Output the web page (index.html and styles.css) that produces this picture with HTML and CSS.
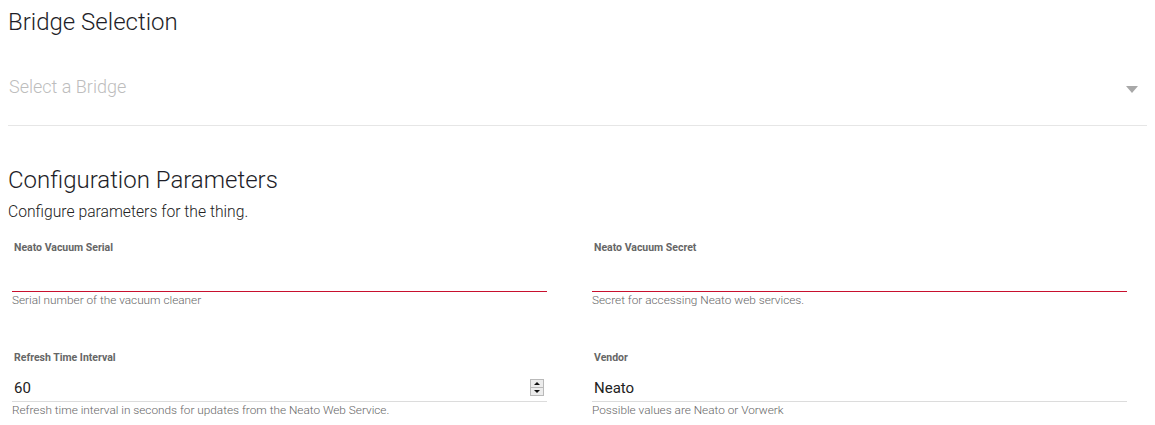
FILE: index.html
```html
<!DOCTYPE html>
<html lang="en">
<head>
<meta charset="utf-8">
<title>Thing configuration</title>
<link rel="stylesheet" href="styles.css">
</head>
<body>
  <h2 class="section-title">Bridge Selection</h2>
  <div class="bridge-select">
    <span class="placeholder">Select a Bridge</span>
    <span class="caret"></span>
  </div>

  <h2 class="section-title config-title">Configuration Parameters</h2>
  <p class="section-desc">Configure parameters for the thing.</p>

  <div class="fields">
    <div class="field">
      <label class="field-label">Neato Vacuum Serial</label>
      <div class="field-input invalid"><input type="text" value=""></div>
      <div class="field-help">Serial number of the vacuum cleaner</div>
    </div>
    <div class="field">
      <label class="field-label">Neato Vacuum Secret</label>
      <div class="field-input invalid"><input type="text" value=""></div>
      <div class="field-help">Secret for accessing Neato web services.</div>
    </div>
    <div class="field">
      <label class="field-label">Refresh Time Interval</label>
      <div class="field-input">
        <input type="text" value="60">
        <span class="spinner"><span class="spin-up"></span><span class="spin-down"></span></span>
      </div>
      <div class="field-help">Refresh time interval in seconds for updates from the Neato Web Service.</div>
    </div>
    <div class="field">
      <label class="field-label">Vendor</label>
      <div class="field-input"><input type="text" value="Neato"></div>
      <div class="field-help">Possible values are Neato or Vorwerk</div>
    </div>
  </div>
</body>
</html>
```
FILE: styles.css
```css
html, body {
  margin: 0;
  padding: 0;
  background: #ffffff;
}
body {
  margin: 8px;
  font-family: Roboto, "Liberation Sans", Arial, sans-serif;
  color: #222;
}
.section-title {
  margin: 0;
  font-size: 24px;
  font-weight: 300;
  line-height: 29px;
  color: #1e1e28;
}
.bridge-select {
  position: relative;
  margin-top: 39px;
  padding: 0 0 27px 1px;
  border-bottom: 1px solid #e6e6e6;
  line-height: 21px;
}
.placeholder {
  font-size: 18px;
  font-weight: 300;
  color: #bdbdbd;
}
.caret {
  position: absolute;
  right: 9px;
  top: 10px;
  width: 0;
  height: 0;
  border-left: 6px solid transparent;
  border-right: 6px solid transparent;
  border-top: 7px solid #a8a8a8;
}
.config-title {
  margin-top: 40px;
}
.section-desc {
  margin: 7px 0 0;
  font-size: 15.7px;
  font-weight: 300;
  line-height: 20px;
  color: #222;
}
.fields {
  display: grid;
  grid-template-columns: 535px 535px;
  column-gap: 45px;
  row-gap: 44px;
  padding: 0 20px 0 4px;
  margin-top: 19px;
}
.field {
  display: flex;
  flex-direction: column;
}
.field-label {
  padding-left: 2px;
  font-size: 10.5px;
  font-weight: 700;
  line-height: 13px;
  color: #666;
}
.field-input {
  position: relative;
  height: 38px;
  box-sizing: border-box;
  border-bottom: 1px solid #dcdcdc;
}
.field-input.invalid {
  border-bottom-color: #c8102e;
}
.field-input input {
  display: block;
  width: 100%;
  height: 37px;
  box-sizing: border-box;
  margin: 0;
  padding: 14px 0 4px 2px;
  border: 0;
  outline: none;
  background: transparent;
  font-family: inherit;
  font-size: 15px;
  font-weight: 400;
  line-height: 19px;
  color: #222;
}
.spinner {
  position: absolute;
  right: 3px;
  top: 15px;
  width: 14px;
  height: 17px;
  box-sizing: border-box;
  border: 1px solid #b9b9b9;
  background: #ececec;
  display: flex;
  flex-direction: column;
}
.spin-up, .spin-down {
  flex: 1;
  position: relative;
}
.spin-up {
  border-bottom: 1px solid #b9b9b9;
}
.spin-up::after, .spin-down::after {
  content: "";
  position: absolute;
  left: 3px;
  width: 0;
  height: 0;
  border-left: 3px solid transparent;
  border-right: 3px solid transparent;
}
.spin-up::after {
  top: 2px;
  border-bottom: 3px solid #111;
}
.spin-down::after {
  top: 2px;
  border-top: 3px solid #111;
}
.field-help {
  margin-top: 1px;
  font-size: 11.8px;
  font-weight: 300;
  line-height: 14px;
  color: #666;
}
```
